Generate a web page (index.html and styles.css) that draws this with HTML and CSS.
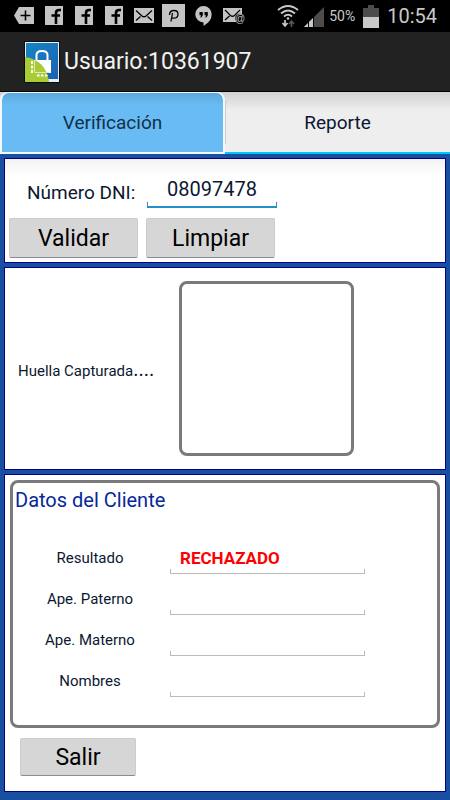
FILE: index.html
```html
<!DOCTYPE html>
<html lang="es">
<head>
<meta charset="utf-8">
<meta name="viewport" content="width=device-width, initial-scale=1">
<title>Usuario:10361907</title>
<link rel="stylesheet" href="styles.css">
</head>
<body>
<div class="status">
  <div class="notices">
    <svg viewBox="0 0 30 32"><path d="M5 15.500l5-8.500h15v17H10z" fill="#c4c4c4"/><path d="M11.500 15.500h10M16.500 10.500v10" stroke="#000" stroke-width="1.600"/></svg>
    <svg viewBox="0 0 30 32"><path d="M6 6h18v19H6z" fill="#c4c4c4"/><path d="M22 10h-2q-3 0-3 3v11M12.500 15.500h8.500" fill="none" stroke="#000" stroke-width="2.600"/></svg>
    <svg viewBox="0 0 30 32"><path d="M6 6h18v19H6z" fill="#c4c4c4"/><path d="M22 10h-2q-3 0-3 3v11M12.500 15.500h8.500" fill="none" stroke="#000" stroke-width="2.600"/></svg>
    <svg viewBox="0 0 30 32"><path d="M6 6h18v19H6z" fill="#c4c4c4"/><path d="M22 10h-2q-3 0-3 3v11M12.500 15.500h8.500" fill="none" stroke="#000" stroke-width="2.600"/></svg>
    <svg viewBox="0 0 30 32"><path d="M5 8h20v15H5z" fill="#c4c4c4"/><path d="M7 10.500l6 5.500q2 1.500 4 0l6-5.500M7 20.500l4.500-4M23 20.500l-4.500-4" fill="none" stroke="#000" stroke-width="1.300"/></svg>
    <svg viewBox="0 0 30 32"><path d="M3 4h23v23H3z" fill="#c4c4c4"/><path d="M10.500 15q0-4.500 4.500-4.500 4 0 4 3.700 0 4-4.500 4-1.200 0-2-.7M13.500 13l-1.500 8.500" fill="none" stroke="#000" stroke-width="1.300"/></svg>
    <svg viewBox="0 0 30 32"><path d="M14.500 6a8.200 8.200 0 0 1 8.200 8.300q0 7-8.200 11.700v-3.500A8.200 8.200 0 0 1 14.500 6z" fill="#c4c4c4"/><path d="M10.500 12h3.300v3.500l-1.500 2h-1l.7-2.300h-1.500zM15.500 12h3.300v3.500l-1.500 2h-1l.7-2.300h-1.500z" fill="#000"/></svg>
    <svg viewBox="0 0 30 32"><path d="M4 8h19v14H4z" fill="#c4c4c4"/><path d="M6 10l5.500 5.500q2 1.500 4 0L21 10M6 20l4.500-4M17 16l2 2" fill="none" stroke="#000" stroke-width="1.300"/><circle cx="21" cy="18.500" r="4.800" fill="#000"/><text x="16" y="21.500" class="at">@</text></svg>
  </div>
  <div class="system">
    <svg class="wifi" viewBox="0 0 22 24"><path d="M1 6q10-8 20 0M4 9.500q7-6 14 0M7 12.500q4-3.500 8 0" fill="none" stroke="#c8c8c8" stroke-width="2"/><circle cx="11" cy="14.500" r="1.300" fill="#c8c8c8"/><path d="M8 16v6M5.500 19l2.500 3 2.500-3" fill="none" stroke="#c8c8c8" stroke-width="1.700"/><path d="M14.500 23v-6M12 20l2.500-3 2.500 3" fill="none" stroke="#555" stroke-width="1.700"/></svg>
    <svg class="signal" viewBox="0 0 22 24"><path d="M21 3v20H1z" fill="#4c4c4c"/><path d="M1 23l4-4v4zM6 23v-5l4-4v9z" fill="#c8c8c8"/><path d="M5.500 18v5M10.500 12v11" stroke="#000"/></svg>
    <span class="percent">50%</span>
    <svg class="battery" viewBox="0 0 16 24"><path d="M5 1h6v3h5v20H0V4h5z" fill="#4c4c4c"/><path d="M0 13h16v11H0z" fill="#c8c8c8"/></svg>
    <time class="clock">10:54</time>
  </div>
</div>
<header class="appbar">
  <svg class="logo" viewBox="0 0 36 42">
    <defs><linearGradient id="sky" x1="0" y1="0" x2="1" y2="1"><stop offset="0" stop-color="#1684c6"/><stop offset="1" stop-color="#1c62b0"/></linearGradient></defs>
    <path d="M0 0h36v42H0z" fill="#0c0c0c"/><path d="M1 1h34v40H1z" fill="#e9eef2"/><path d="M2 2h32v36H2z" fill="url(#sky)"/>
    <path d="M12.500 19v-5q0-4 5.500-4t5.500 4v5" fill="none" stroke="#fff" stroke-width="2"/><path d="M10 19h17v13H10z" fill="#fff"/>
    <path d="M1 16q21 3 24 25H1z" fill="#a9cb35"/>
    <path d="M8 20v13" stroke="#fff" stroke-width="2" stroke-dasharray="3 1.500"/><path d="M13 34.500h11" stroke="#fff" stroke-width="2" stroke-dasharray="2.500 1.500"/><path d="M10.500 19v12.500H25" fill="none" stroke="#dcebb0"/>
  </svg>
  <h1>Usuario:10361907</h1>
</header>
<nav class="tabs">
  <button class="tab active" type="button">Verificación</button>
  <button class="tab" type="button">Reporte</button>
</nav>
<main>
  <section class="panel lookup">
    <div class="dni">
      <label for="dni">Número DNI:</label>
      <input id="dni" class="line focus" type="text" value="08097478">
    </div>
    <div class="actions">
      <button class="btn" type="button">Validar</button>
      <button class="btn" type="button">Limpiar</button>
    </div>
  </section>
  <section class="panel capture">
    <p>Huella Capturada<span class="dots">....</span></p>
    <div class="print"></div>
  </section>
  <section class="panel client">
    <div class="card">
      <h2>Datos del Cliente</h2>
      <div class="fields">
        <label for="res">Resultado</label><input id="res" class="line result" type="text" value="RECHAZADO">
        <label for="pat">Ape. Paterno</label><input id="pat" class="line" type="text">
        <label for="mat">Ape. Materno</label><input id="mat" class="line" type="text">
        <label for="nom">Nombres</label><input id="nom" class="line" type="text">
      </div>
    </div>
    <button class="btn exit" type="button">Salir</button>
  </section>
</main>
</body>
</html>
```
FILE: styles.css
```css
* { box-sizing: border-box; }
body {
  margin: 0;
  min-height: 100vh;
  display: flex;
  flex-direction: column;
  background: #184fa0;
  color: #0b1830;
  font-family: Roboto, "Liberation Sans", sans-serif;
}
h1, h2, p { margin: 0; font-weight: 400; }
button, input { font: inherit; color: inherit; border: 0; padding: 0; border-radius: 0; }

.status {
  display: flex;
  justify-content: space-between;
  height: 32px;
  padding: 0 13px 0 9px;
  background: #000;
  color: #c8c8c8;
}
.notices { display: flex; }
.notices svg { width: 30px; height: 32px; }
.at { font: 10px "Liberation Sans", sans-serif; fill: #c4c4c4; }
.system { display: flex; align-items: center; gap: 4px; }
.wifi, .signal { width: 22px; height: 24px; }
.percent { font-size: 14px; }
.battery { width: 16px; height: 24px; margin: 0 4px; }
.clock { font-size: 20px; }

.appbar {
  display: flex;
  align-items: center;
  gap: 4px;
  height: 59px;
  padding: 0 24px;
  background: #222;
  color: #f2f2f2;
}
.logo { width: 36px; height: 42px; }
.appbar h1 { font-size: 23px; }

.tabs {
  display: grid;
  grid-template-columns: 1fr 1fr;
  height: 63px;
  border-top: 1px solid #000;
  background: linear-gradient(#d2d0d0, #eee 18px);
}
.tab {
  background: linear-gradient(#ccc, #ccc) left center / 1px 44px no-repeat;
  border-bottom: 2px solid #00c8f8;
  font-size: 19px;
}
.tab.active {
  border: 2px solid #f4f8fc;
  border-top-width: 1px;
  border-radius: 8px 8px 0 0;
  background: linear-gradient(#5ba9de, #69bcf3 12px);
  background-clip: padding-box;
  color: #12304c;
}

main {
  flex: 1;
  display: flex;
  flex-direction: column;
  gap: 4px;
  padding: 4px 4px 9px;
}
.panel { border: 1px solid #00008b; background: #fff; }

.lookup { padding: 13px 4px 4px; background: linear-gradient(#f2f2f2, #fff 18px); }
.dni { display: flex; gap: 12px; padding-left: 18px; }
.dni label { width: 108px; font-size: 19px; line-height: 42px; white-space: nowrap; }
.line {
  height: 36px;
  border-bottom: 1px solid #bbb;
  background:
    linear-gradient(#bbb, #bbb) left bottom / 1px 4px no-repeat,
    linear-gradient(#bbb, #bbb) right bottom / 1px 4px no-repeat;
}
.line.focus {
  width: 130px;
  border-bottom: 2px solid #2590c8;
  background:
    linear-gradient(#2590c8, #2590c8) left bottom / 1px 4px no-repeat,
    linear-gradient(#2590c8, #2590c8) right bottom / 1px 4px no-repeat;
  font-size: 20px;
  text-align: center;
}
.actions { display: flex; gap: 8px; margin-top: 4px; }
.btn {
  width: 129px;
  height: 40px;
  border: 1px solid #ccc;
  border-bottom: 1px solid #8c8c8c;
  border-radius: 2px;
  background: #d6d6d6;
  color: #000;
  font-size: 23px;
}

.capture { display: flex; align-items: center; padding: 13px; }
.capture p { width: 161px; font-size: 15px; }
.dots { font-size: 20px; }
.print {
  width: 175px;
  height: 175px;
  border: 3px solid #7b7979;
  border-radius: 8px;
}

.client { flex: 1; padding: 5px; }
.card { padding: 3px 2px 23px; border: 3px solid #7b7979; border-radius: 8px; }
.card h2 { font-size: 20px; line-height: 28px; color: #06289a; }
.fields {
  display: grid;
  grid-template-columns: 150px 195px;
  grid-auto-rows: 41px;
  gap: 0 5px;
  margin-top: 24px;
}
.fields label { font-size: 15px; line-height: 41px; text-align: center; }
.result { padding: 4px 0 0 10px; font-size: 17px; font-weight: 700; color: #f00; }
.exit { display: block; width: 116px; height: 38px; margin: 10px; }
```
